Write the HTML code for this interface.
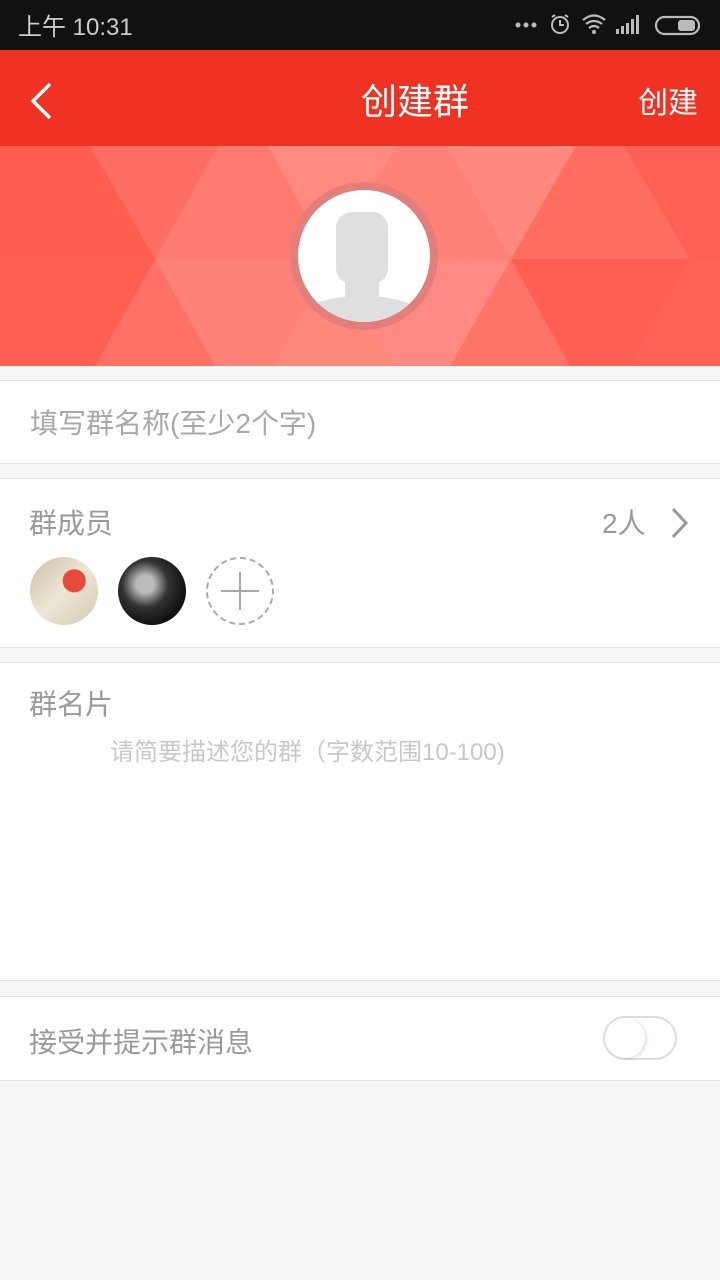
<!DOCTYPE html>
<html><head><meta charset="utf-8">
<style>
*{margin:0;padding:0;box-sizing:border-box}
body{width:720px;height:1280px;background:#f6f6f6;font-family:"Liberation Sans","Noto Sans CJK SC",sans-serif;position:relative;overflow:hidden}
.abs{position:absolute}
.sec{position:absolute;left:0;width:720px;background:#fff;border-top:1px solid #e2e2e2;border-bottom:1px solid #e2e2e2}
.t{position:absolute;font-size:28px;color:#9a9a9a;white-space:nowrap}
</style></head><body>
<div class="abs" style="left:0;top:0;width:720px;height:50px;background:#111"></div>
<div class="t" style="left:18px;top:7px;font-size:24px;color:#ccc">上午 10:31</div>
<svg class="abs" style="left:510px;top:10px" width="200" height="30" viewBox="510 10 200 30">
<g fill="#bbb"><circle cx="518" cy="25" r="2.5"/><circle cx="526" cy="25" r="2.5"/><circle cx="534" cy="25" r="2.5"/></g>
<circle cx="560" cy="25" r="8" fill="none" stroke="#bbb" stroke-width="2"/><path d="M560 20v5h4M552 17l3-2M568 17l-3-2" stroke="#bbb" stroke-width="2" fill="none"/>
<path d="M583 20q11-9 22 0M586 24q8-6 16 0M589 28q5-4 10 0" stroke="#bbb" stroke-width="2.2" fill="none"/><circle cx="594" cy="32" r="2" fill="#bbb"/>
<g fill="#bbb"><rect x="616" y="29" width="3" height="5"/><rect x="621" y="26" width="3" height="8"/><rect x="626" y="23" width="3" height="11"/><rect x="631" y="19" width="3" height="15"/><rect x="636" y="15" width="3" height="19"/></g>
<rect x="656" y="17" width="43" height="17" rx="8.5" fill="none" stroke="#bbb" stroke-width="2.2"/><rect x="678" y="20" width="17" height="11" rx="3" fill="#bbb"/>
</svg>
<div class="abs" style="left:0;top:50px;width:720px;height:96px;background:#f03223"></div>
<svg class="abs" style="left:28px;top:82px" width="26" height="38"><path d="M22 2L5 19l17 17" stroke="#fff" stroke-width="3.5" fill="none"/></svg>
<div class="t" style="left:0;width:720px;text-align:center;top:73px;color:#fff;font-size:36px;padding-left:110px">创建群</div>
<div class="t" style="left:638px;top:78px;color:#fff;font-size:30px">创建</div>
<svg class="abs" style="left:0;top:146px" width="720" height="220" viewBox="0 146 720 220">
<rect x="0" y="146" width="720" height="220" fill="#ff7468"/>
<polygon points="0,146 90,146 155,259 0,259" fill="#ff5d4f"/>
<polygon points="90,146 218,146 155,259" fill="#ff6e62"/>
<polygon points="218,146 268,146 330,259 155,259" fill="#ff7a6f"/>
<polygon points="268,146 397,146 330,259" fill="#ff8a80"/>
<polygon points="397,146 447,146 511,259 330,259" fill="#ff8278"/>
<polygon points="447,146 576,146 511,259" fill="#ff897f"/>
<polygon points="576,146 624,146 690,259 511,259" fill="#ff6e60"/>
<polygon points="624,146 720,146 720,259 690,259" fill="#ff6054"/>
<polygon points="0,259 155,259 95,366 0,366" fill="#ff5f52"/>
<polygon points="155,259 95,366 215,366" fill="#ff7066"/>
<polygon points="155,259 330,259 275,366 215,366" fill="#ff8278"/>
<polygon points="330,259 275,366 395,366" fill="#ff887c"/>
<polygon points="330,259 511,259 450,366 395,366" fill="#ff8a84"/>
<polygon points="511,259 450,366 570,366" fill="#ff7468"/>
<polygon points="511,259 690,259 630,366 570,366" fill="#ff5f52"/>
<polygon points="690,259 720,259 720,366 630,366" fill="#ff6356"/>
<circle cx="364" cy="256" r="74" fill="#e27f7a"/>
<circle cx="364" cy="256" r="66" fill="#fff"/>
<clipPath id="c"><circle cx="364" cy="256" r="66"/></clipPath>
<g clip-path="url(#c)" fill="#dfdfdf">
<rect x="336" y="212" width="52" height="72" rx="16"/>
<rect x="345" y="270" width="34" height="30"/>
<ellipse cx="362" cy="322" rx="68" ry="26"/>
</g>
</svg>
<div class="sec" style="top:380px;height:84px"></div>
<div class="t" style="left:30px;top:402px;color:#a8a8a8">填写群名称(至少2个字)</div>
<div class="sec" style="top:478px;height:170px"></div>
<div class="t" style="left:29px;top:502px">群成员</div>
<div class="t" style="left:602px;top:502px">2人</div>
<svg class="abs" style="left:668px;top:506px" width="24" height="34"><path d="M5 3l13 14L5 31" stroke="#999" stroke-width="3" fill="none"/></svg>
<div class="abs" style="left:30px;top:557px;width:68px;height:68px;border-radius:50%;background:radial-gradient(circle at 65% 35%,#e84a3a 0 18%,transparent 19%),linear-gradient(135deg,#c9bfa8,#ede7d6 50%,#d4c8b0)"></div>
<div class="abs" style="left:118px;top:557px;width:68px;height:68px;border-radius:50%;background:radial-gradient(circle at 40% 40%,#bbb 0 15%,#333 40%,#111 70%),#111"></div>
<div class="abs" style="left:206px;top:557px;width:68px;height:68px;border-radius:50%;border:2px dashed #aaa"></div>
<div class="abs" style="left:221px;top:590px;width:38px;height:2px;background:#aaa"></div>
<div class="abs" style="left:239px;top:572px;width:2px;height:38px;background:#aaa"></div>
<div class="sec" style="top:662px;height:319px"></div>
<div class="t" style="left:29px;top:683px">群名片</div>
<div class="t" style="left:110px;top:732px;font-size:24px;color:#c8c8c8">请简要描述您的群（字数范围10-100)</div>
<div class="sec" style="top:996px;height:85px"></div>
<div class="t" style="left:29px;top:1021px">接受并提示群消息</div>
<div class="abs" style="left:603px;top:1016px;width:74px;height:44px;border-radius:22px;border:2px solid #ddd;background:#fff"></div>
<div class="abs" style="left:605px;top:1018px;width:40px;height:40px;border-radius:50%;background:#fff;box-shadow:2px 1px 3px rgba(0,0,0,.12)"></div>
</body></html>
